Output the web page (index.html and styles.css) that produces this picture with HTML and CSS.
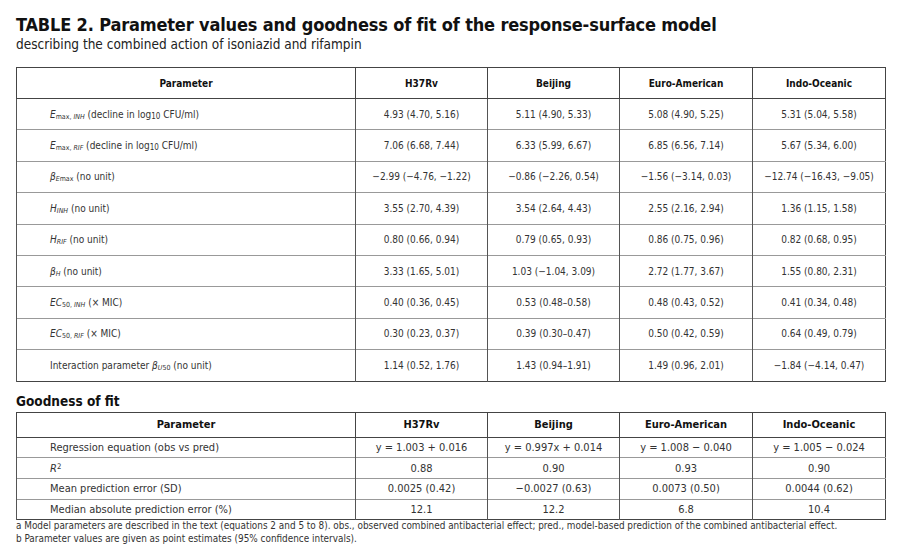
FILE: index.html
```html
<!DOCTYPE html>
<html>
<head>
<meta charset="utf-8">
<link rel="stylesheet" href="styles.css">
</head>
<body>
<div class="page">
  <h1 class="title">TABLE 2. Parameter values and goodness of fit of the response-surface model</h1>
  <p class="subtitle">describing the combined action of isoniazid and rifampin</p>

  <table class="tbl main">
    <colgroup>
      <col class="c1"><col class="c2"><col class="c3"><col class="c4"><col class="c5">
    </colgroup>
    <thead>
      <tr><th>Parameter</th><th>H37Rv</th><th>Beijing</th><th>Euro-American</th><th>Indo-Oceanic</th></tr>
    </thead>
    <tbody>
      <tr><td class="p"><i>E</i><sub>max, <i>INH</i></sub> (decline in log<sub class="n">10</sub> CFU/ml)</td><td>4.93 (4.70, 5.16)</td><td>5.11 (4.90, 5.33)</td><td>5.08 (4.90, 5.25)</td><td>5.31 (5.04, 5.58)</td></tr>
      <tr><td class="p"><i>E</i><sub>max, <i>RIF</i></sub> (decline in log<sub class="n">10</sub> CFU/ml)</td><td>7.06 (6.68, 7.44)</td><td>6.33 (5.99, 6.67)</td><td>6.85 (6.56, 7.14)</td><td>5.67 (5.34, 6.00)</td></tr>
      <tr><td class="p"><i>β</i><sub><i>E</i>max</sub> (no unit)</td><td>−2.99 (−4.76, −1.22)</td><td>−0.86 (−2.26, 0.54)</td><td>−1.56 (−3.14, 0.03)</td><td>−12.74 (−16.43, −9.05)</td></tr>
      <tr><td class="p"><i>H</i><sub><i>INH</i></sub> (no unit)</td><td>3.55 (2.70, 4.39)</td><td>3.54 (2.64, 4.43)</td><td>2.55 (2.16, 2.94)</td><td>1.36 (1.15, 1.58)</td></tr>
      <tr><td class="p"><i>H</i><sub><i>RIF</i></sub> (no unit)</td><td>0.80 (0.66, 0.94)</td><td>0.79 (0.65, 0.93)</td><td>0.86 (0.75, 0.96)</td><td>0.82 (0.68, 0.95)</td></tr>
      <tr><td class="p"><i>β</i><sub><i>H</i></sub> (no unit)</td><td>3.33 (1.65, 5.01)</td><td>1.03 (−1.04, 3.09)</td><td>2.72 (1.77, 3.67)</td><td>1.55 (0.80, 2.31)</td></tr>
      <tr><td class="p"><i>EC</i><sub>50, <i>INH</i></sub> (× MIC)</td><td>0.40 (0.36, 0.45)</td><td>0.53 (0.48–0.58)</td><td>0.48 (0.43, 0.52)</td><td>0.41 (0.34, 0.48)</td></tr>
      <tr><td class="p"><i>EC</i><sub>50, <i>RIF</i></sub> (× MIC)</td><td>0.30 (0.23, 0.37)</td><td>0.39 (0.30–0.47)</td><td>0.50 (0.42, 0.59)</td><td>0.64 (0.49, 0.79)</td></tr>
      <tr><td class="p">Interaction parameter <i>β</i><sub><i>U</i>50</sub> (no unit)</td><td>1.14 (0.52, 1.76)</td><td>1.43 (0.94–1.91)</td><td>1.49 (0.96, 2.01)</td><td>−1.84 (−4.14, 0.47)</td></tr>
    </tbody>
  </table>

  <h2 class="section">Goodness of fit</h2>

  <table class="tbl fit">
    <colgroup>
      <col class="c1"><col class="c2"><col class="c3"><col class="c4"><col class="c5">
    </colgroup>
    <thead>
      <tr><th>Parameter</th><th>H37Rv</th><th>Beijing</th><th>Euro-American</th><th>Indo-Oceanic</th></tr>
    </thead>
    <tbody>
      <tr><td class="p">Regression equation (obs vs pred)</td><td>y = 1.003 + 0.016</td><td>y = 0.997x + 0.014</td><td>y = 1.008 − 0.040</td><td>y = 1.005 − 0.024</td></tr>
      <tr><td class="p"><i>R</i><sup>2</sup></td><td>0.88</td><td>0.90</td><td>0.93</td><td>0.90</td></tr>
      <tr><td class="p">Mean prediction error (SD)</td><td>0.0025 (0.42)</td><td>−0.0027 (0.63)</td><td>0.0073 (0.50)</td><td>0.0044 (0.62)</td></tr>
      <tr><td class="p">Median absolute prediction error (%)</td><td>12.1</td><td>12.2</td><td>6.8</td><td>10.4</td></tr>
    </tbody>
  </table>

  <div class="notes">
    <p>a Model parameters are described in the text (equations 2 and 5 to 8). obs., observed combined antibacterial effect; pred., model-based prediction of the combined antibacterial effect.</p>
    <p>b Parameter values are given as point estimates (95% confidence intervals).</p>
  </div>
</div>
</body>
</html>
```

FILE: styles.css
```css
html, body {
  margin: 0;
  padding: 0;
  background: #ffffff;
}

.page {
  padding: 14px 15px 0 16px;
  font-family: "DejaVu Sans", "Liberation Sans", sans-serif;
  color: #111;
}

.title {
  margin: 0;
  font-size: 18px;
  line-height: 22px;
  font-weight: bold;
  font-stretch: condensed;
  letter-spacing: -0.16px;
  color: #111;
}

.subtitle {
  margin: 0;
  font-size: 13.5px;
  line-height: 16px;
  color: #222;
  font-stretch: condensed;
}

.tbl {
  border-collapse: collapse;
  width: 869px;
  table-layout: fixed;
  border: 1.5px solid #444;
}

.tbl .c1 { width: 339px; }
.tbl .c2 { width: 132px; }
.tbl .c3 { width: 132px; }
.tbl .c4 { width: 133px; }
.tbl .c5 { width: 133px; }

.tbl th {
  font-weight: bold;
  color: #111;
  text-align: center;
  border-left: 1px solid #444;
  border-bottom: 1.5px solid #444;
  padding: 0;
  font-stretch: condensed;
}

.tbl td {
  text-align: center;
  color: #333;
  border-left: 1px solid #555;
  border-top: 1px solid #999;
  padding: 0;
  white-space: nowrap;
  font-stretch: condensed;
}

.tbl td.p {
  text-align: left;
  padding-left: 33px;
}

.tbl sub, .tbl sup {
  font-size: 70%;
  line-height: 0;
  vertical-align: -0.15em;
}

.tbl sup {
  vertical-align: 0.45em;
}

.tbl sub.n {
  font-size: 80%;
}

.main {
  margin-top: 15px;
}

.main th {
  height: 30px;
  font-size: 10px;
}

.main td {
  height: 30.4px;
  font-size: 10px;
}

.section {
  margin: 11px 0 2px 0;
  font-size: 13.5px;
  line-height: 17px;
  font-weight: bold;
  font-stretch: condensed;
  color: #111;
}

.fit th {
  height: 24px;
  font-size: 11px;
}

.fit td {
  height: 19.7px;
  font-size: 11px;
}

.notes {
  font-size: 9.9px;
  line-height: 12.5px;
  color: #333;
  font-stretch: condensed;
}

.notes p {
  margin: 0;
}
```
